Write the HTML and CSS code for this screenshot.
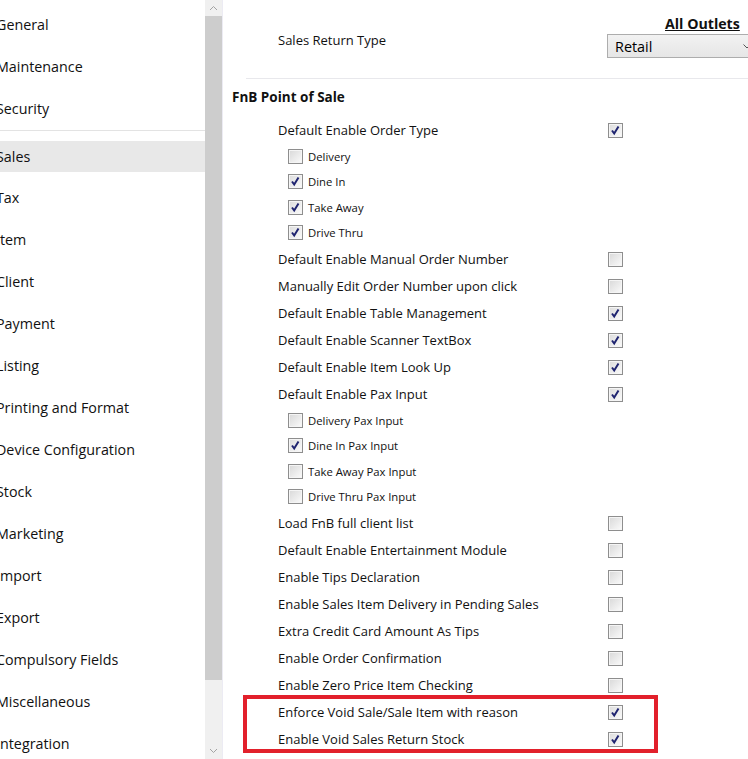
FILE: index.html
```html
<!DOCTYPE html>
<html lang="en">
<head>
    <meta charset="UTF-8">
    <meta name="viewport" content="width=device-width, initial-scale=1.0">
    <title>Settings - Sales</title>
    <link rel="stylesheet" href="styles.css">
</head>
<body>
    <div class="page">
        <div class="sidebar">
            <ul class="menu">
                <li class="menu-item">General</li>
                <li class="menu-item">Maintenance</li>
                <li class="menu-item menu-sep">Security</li>
                <li class="menu-item active"><span>Sales</span></li>
                <li class="menu-item">Tax</li>
                <li class="menu-item">Item</li>
                <li class="menu-item">Client</li>
                <li class="menu-item">Payment</li>
                <li class="menu-item">Listing</li>
                <li class="menu-item">Printing and Format</li>
                <li class="menu-item">Device Configuration</li>
                <li class="menu-item">Stock</li>
                <li class="menu-item">Marketing</li>
                <li class="menu-item">Import</li>
                <li class="menu-item">Export</li>
                <li class="menu-item">Compulsory Fields</li>
                <li class="menu-item">Miscellaneous</li>
                <li class="menu-item">Integration</li>
            </ul>
            <div class="scrollbar">
                <div class="scroll-btn">
                    <svg width="9" height="6" viewBox="0 0 9 6"><path d="M1 5L4.5 1.5L8 5" fill="none" stroke="#a3a3a3" stroke-width="1"/></svg>
                </div>
                <div class="scroll-thumb"></div>
                <div class="scroll-track"></div>
                <div class="scroll-btn">
                    <svg width="9" height="6" viewBox="0 0 9 6"><path d="M1 1L4.5 4.5L8 1" fill="none" stroke="#a3a3a3" stroke-width="1"/></svg>
                </div>
            </div>
        </div>

        <div class="main">
            <div class="outlets">All Outlets</div>
            <div class="return-row">
                <div class="return-label">Sales Return Type</div>
                <div class="dropdown">
                    <span>Retail</span>
                    <svg class="dropdown-arrow" width="8" height="5" viewBox="0 0 8 5"><path d="M0.5 0.5L4 4L7.5 0.5" fill="none" stroke="#555" stroke-width="1"/></svg>
                </div>
            </div>
            <div class="divider"></div>
            <div class="section-title">FnB Point of Sale</div>

            <div class="settings">
                <div class="row"><div class="label">Default Enable Order Type</div><span class="cb checked"></span></div>
                <div class="row sub"><span class="cb"></span><div class="label">Delivery</div></div>
                <div class="row sub"><span class="cb checked"></span><div class="label">Dine In</div></div>
                <div class="row sub"><span class="cb checked"></span><div class="label">Take Away</div></div>
                <div class="row sub"><span class="cb checked"></span><div class="label">Drive Thru</div></div>
                <div class="row"><div class="label">Default Enable Manual Order Number</div><span class="cb"></span></div>
                <div class="row"><div class="label">Manually Edit Order Number upon click</div><span class="cb"></span></div>
                <div class="row"><div class="label">Default Enable Table Management</div><span class="cb checked"></span></div>
                <div class="row"><div class="label">Default Enable Scanner TextBox</div><span class="cb checked"></span></div>
                <div class="row"><div class="label">Default Enable Item Look Up</div><span class="cb checked"></span></div>
                <div class="row"><div class="label">Default Enable Pax Input</div><span class="cb checked"></span></div>
                <div class="row sub"><span class="cb"></span><div class="label">Delivery Pax Input</div></div>
                <div class="row sub"><span class="cb checked"></span><div class="label">Dine In Pax Input</div></div>
                <div class="row sub"><span class="cb"></span><div class="label">Take Away Pax Input</div></div>
                <div class="row sub"><span class="cb"></span><div class="label">Drive Thru Pax Input</div></div>
                <div class="row"><div class="label">Load FnB full client list</div><span class="cb"></span></div>
                <div class="row"><div class="label">Default Enable Entertainment Module</div><span class="cb"></span></div>
                <div class="row"><div class="label">Enable Tips Declaration</div><span class="cb"></span></div>
                <div class="row"><div class="label">Enable Sales Item Delivery in Pending Sales</div><span class="cb"></span></div>
                <div class="row"><div class="label">Extra Credit Card Amount As Tips</div><span class="cb"></span></div>
                <div class="row"><div class="label">Enable Order Confirmation</div><span class="cb"></span></div>
                <div class="row"><div class="label">Enable Zero Price Item Checking</div><span class="cb"></span></div>
                <div class="highlight">
                    <div class="row"><div class="label">Enforce Void Sale/Sale Item with reason</div><span class="cb checked"></span></div>
                    <div class="row"><div class="label">Enable Void Sales Return Stock</div><span class="cb checked"></span></div>
                </div>
            </div>
        </div>
    </div>
</body>
</html>
```

FILE: styles.css
```css
html, body {
    margin: 0;
    padding: 0;
    height: 100%;
    overflow: hidden;
    background: white;
}
body {
    font-family: "Open Sans", "Noto Sans", sans-serif;
    color: #111;
}
.page {
    display: flex;
    height: 759px;
}
.sidebar {
    display: flex;
    width: 223px;
    flex-shrink: 0;
    border-right: 1px solid #ecebf3;
    box-sizing: border-box;
}
.menu {
    list-style: none;
    margin: 0;
    padding: 4px 0 0 0;
    width: 205px;
    overflow: hidden;
}
.menu-item {
    height: 42px;
    line-height: 42px;
    font-size: 14.3px;
    text-indent: -4px;
    white-space: nowrap;
}
.menu-sep {
    border-bottom: 1px solid #e3e3e3;
}
.menu-item.active {
    height: auto;
    line-height: normal;
    padding: 10px 0 5px 0;
}
.menu-item.active span {
    display: block;
    height: 31px;
    line-height: 31px;
    background: #e8e8e8;
}
.scrollbar {
    display: flex;
    flex-direction: column;
    width: 17px;
    background: #f0f0f0;
}
.scroll-btn {
    height: 16px;
    display: flex;
    align-items: center;
    justify-content: center;
}
.scroll-thumb {
    height: 664px;
    background: #cdcdcd;
}
.scroll-track {
    flex: 1;
}
.main {
    flex: 1;
    padding-top: 14px;
    min-width: 0;
}
.outlets {
    margin-left: 442px;
    font-size: 14.2px;
    font-weight: bold;
    line-height: 20px;
    text-decoration: underline;
    white-space: nowrap;
}
.return-row {
    display: flex;
    height: 24px;
}
.return-label {
    width: 329px;
    padding-left: 55px;
    font-size: 13px;
    line-height: 12px;
    flex-shrink: 0;
}
.dropdown {
    display: flex;
    align-items: center;
    justify-content: space-between;
    width: 146px;
    flex-shrink: 0;
    height: 24px;
    box-sizing: border-box;
    padding: 0 1px 0 7px;
    border: 1px solid #adadad;
    background: linear-gradient(#f2f2f2, #e6e6e6);
    font-size: 14.4px;
    color: #000;
}
.divider {
    margin: 20px 0 0 23px;
    height: 1px;
    background: #e8e8ec;
}
.section-title {
    margin: 8px 0 0 0;
    padding-left: 9px;
    font-size: 13.5px;
    font-weight: bold;
    line-height: 20px;
}
.settings {
    margin-top: 9.5px;
}
.row {
    display: flex;
    align-items: center;
    height: 27px;
    padding-left: 55px;
}
.row .label {
    width: 330px;
    font-size: 13px;
    white-space: nowrap;
}
.row.sub {
    height: 25.5px;
    padding-left: 65px;
}
.row.sub .label {
    width: auto;
    margin-left: 5px;
    font-size: 11.3px;
}
.cb {
    width: 15px;
    height: 15px;
    box-sizing: border-box;
    border: 1px solid #8e8e8e;
    box-shadow: inset 0 0 0 1px #f5f5f5;
    background: linear-gradient(135deg, #d8d8d8, #fbfbfb);
    flex-shrink: 0;
}
.cb.checked {
    background: url("data:image/svg+xml,%3Csvg xmlns='http://www.w3.org/2000/svg' width='13' height='13' viewBox='0 0 13 13'%3E%3Cpath d='M3 6.5L5.2 9.5L9.5 2.5' fill='none' stroke='%231f2470' stroke-width='2'/%3E%3C/svg%3E") center no-repeat, linear-gradient(135deg, #dcdcdc, #fbfbfb);
}
.highlight {
    position: relative;
}
.highlight::after {
    content: "";
    position: absolute;
    top: -3.5px;
    bottom: -0.5px;
    left: 20px;
    width: 415px;
    box-sizing: border-box;
    border: 4px solid #e2202b;
}
```
